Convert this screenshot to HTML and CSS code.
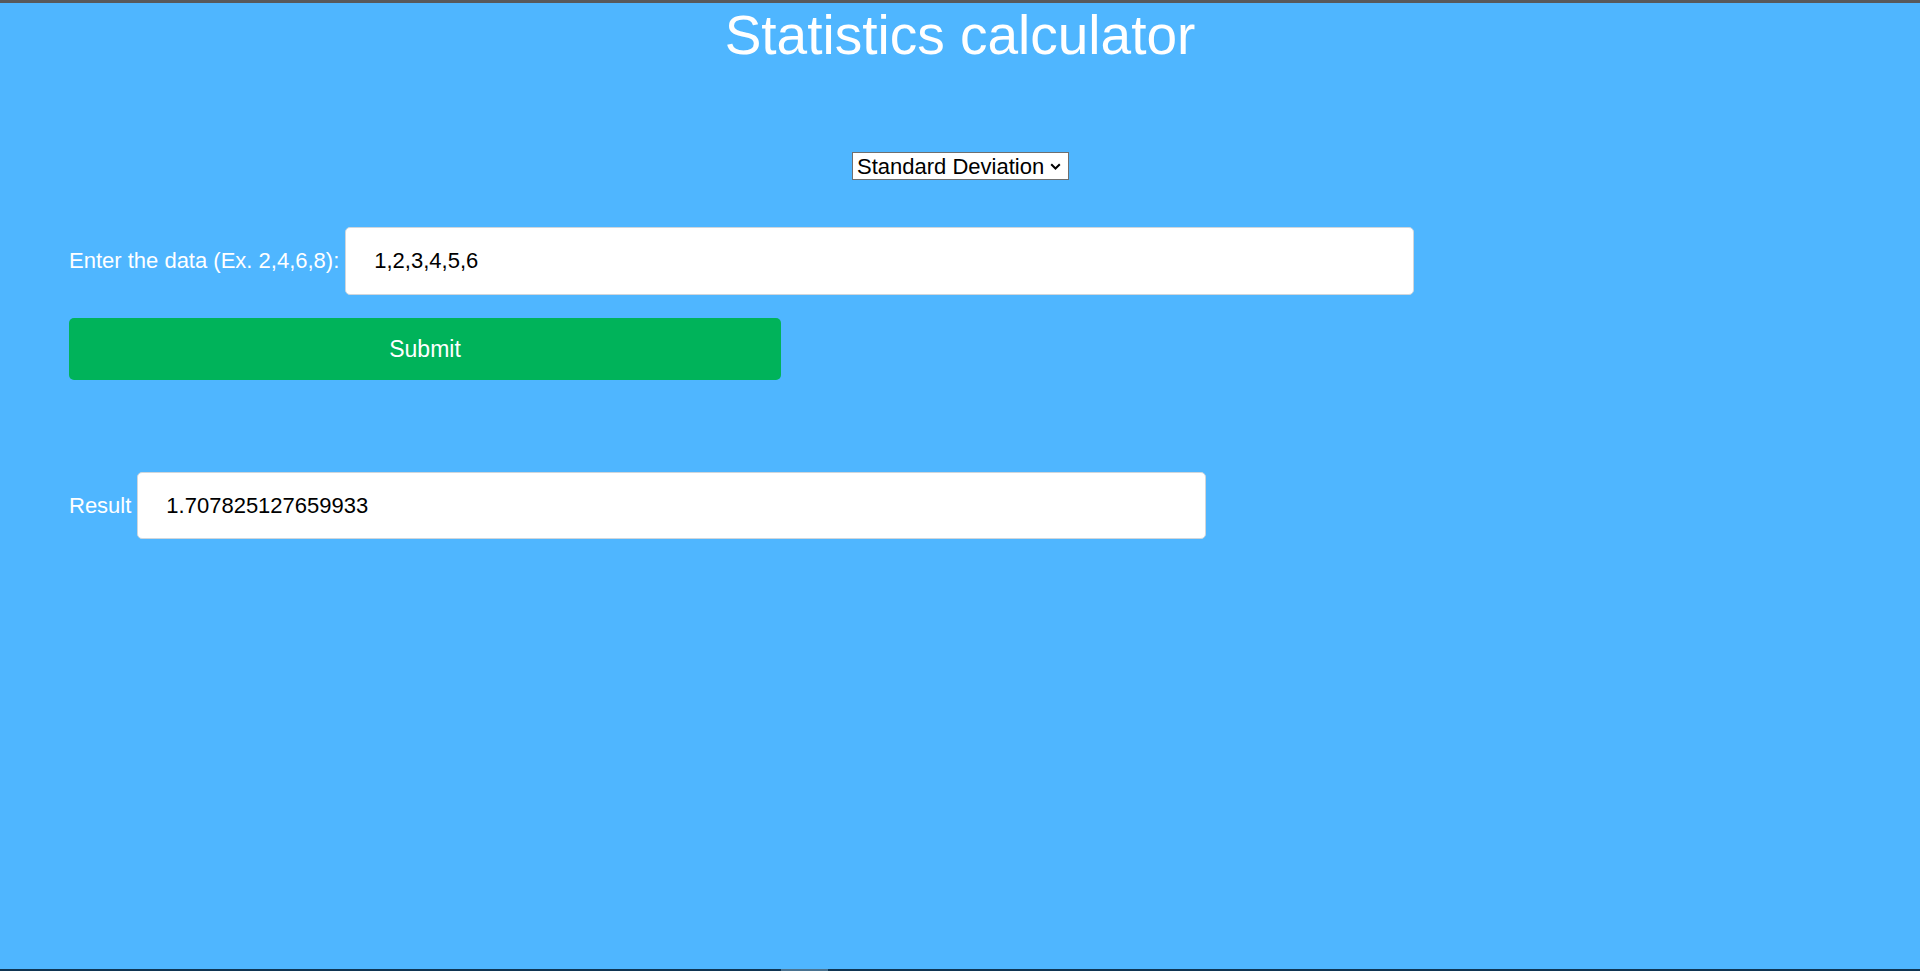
FILE: index.html
```html
<!DOCTYPE html>
<html lang="en">
<head>
<meta charset="utf-8">
<title>Statistics calculator</title>
<link rel="stylesheet" href="styles.css">
</head>
<body>
<div class="topbar"></div>
<main class="page">
  <h1 class="title">Statistics calculator</h1>
  <div class="select-row">
    <div class="select-wrap">
      <select class="op-select">
        <option>Standard Deviation</option>
        <option>Mean</option>
        <option>Median</option>
        <option>Mode</option>
        <option>Variance</option>
      </select>
      <svg class="chevron" width="11" height="7" viewBox="0 0 11 7"><path d="M1.2 1.2 L5.5 5.5 L9.8 1.2" fill="none" stroke="#000" stroke-width="2"/></svg>
    </div>
  </div>
  <div class="row row-data">
    <label class="label" for="data">Enter the data (Ex. 2,4,6,8):</label>
    <input id="data" class="field field-data" type="text" value="1,2,3,4,5,6">
  </div>
  <button class="submit" type="button">Submit</button>
  <div class="row row-result">
    <label class="label" for="result">Result</label>
    <input id="result" class="field field-result" type="text" value="1.707825127659933">
  </div>
</main>
<div class="bottombar"><span class="bottom-seg"></span></div>
</body>
</html>
```

FILE: styles.css
```css
html, body {
  margin: 0;
  padding: 0;
}
body {
  height: 971px;
  overflow: hidden;
  display: flex;
  flex-direction: column;
  background: #4fb6ff;
  font-family: "Liberation Sans", Arial, sans-serif;
  color: #fff;
}
.topbar {
  height: 3px;
  background: #58595b;
  flex: none;
}
.page {
  flex: 1;
  padding: 0 69px;
  display: flex;
  flex-direction: column;
  align-items: flex-start;
}
.title {
  align-self: stretch;
  margin: 1px 0 0;
  font-size: 55px;
  line-height: 63px;
  font-weight: normal;
  text-align: center;
  color: #fff;
}
.select-row {
  align-self: stretch;
  margin-top: 85px;
  display: flex;
  justify-content: center;
  padding-left: 1px;
}
.select-wrap {
  position: relative;
  display: flex;
}
.op-select {
  appearance: none;
  -webkit-appearance: none;
  box-sizing: border-box;
  width: 217px;
  height: 28px;
  margin: 0;
  padding: 2px 24px 0 4px;
  border: 1px solid #6f6f6f;
  border-radius: 0;
  background: #fff;
  color: #000;
  font-family: "Liberation Sans", Arial, sans-serif;
  font-size: 22px;
  line-height: 24px;
}
.chevron {
  position: absolute;
  right: 8px;
  top: 11px;
  pointer-events: none;
}
.row {
  display: flex;
  align-items: center;
  gap: 6px;
}
.row-data {
  margin-top: 47px;
}
.row-result {
  margin-top: 92px;
}
.label {
  font-size: 22px;
  color: #fff;
  white-space: nowrap;
}
.field {
  box-sizing: border-box;
  height: 68px;
  margin: 0;
  padding: 0 28px 0 28px;
  border: 1px solid #cfd6dc;
  border-radius: 5px;
  background: #fff;
  color: #000;
  font-family: "Liberation Sans", Arial, sans-serif;
  font-size: 22px;
  outline: none;
}
.field-data {
  width: 1069px;
}
.field-result {
  width: 1069px;
  height: 67px;
}
.submit {
  margin-top: 23px;
  width: 712px;
  height: 62px;
  border: none;
  border-radius: 5px;
  background: #00b35a;
  color: #fff;
  font-family: "Liberation Sans", Arial, sans-serif;
  font-size: 23px;
  cursor: pointer;
}
.bottombar {
  flex: none;
  height: 2px;
  background: #0f3552;
  display: flex;
  padding-left: 781px;
}
.bottom-seg {
  width: 47px;
  background: #4a7390;
}
```
